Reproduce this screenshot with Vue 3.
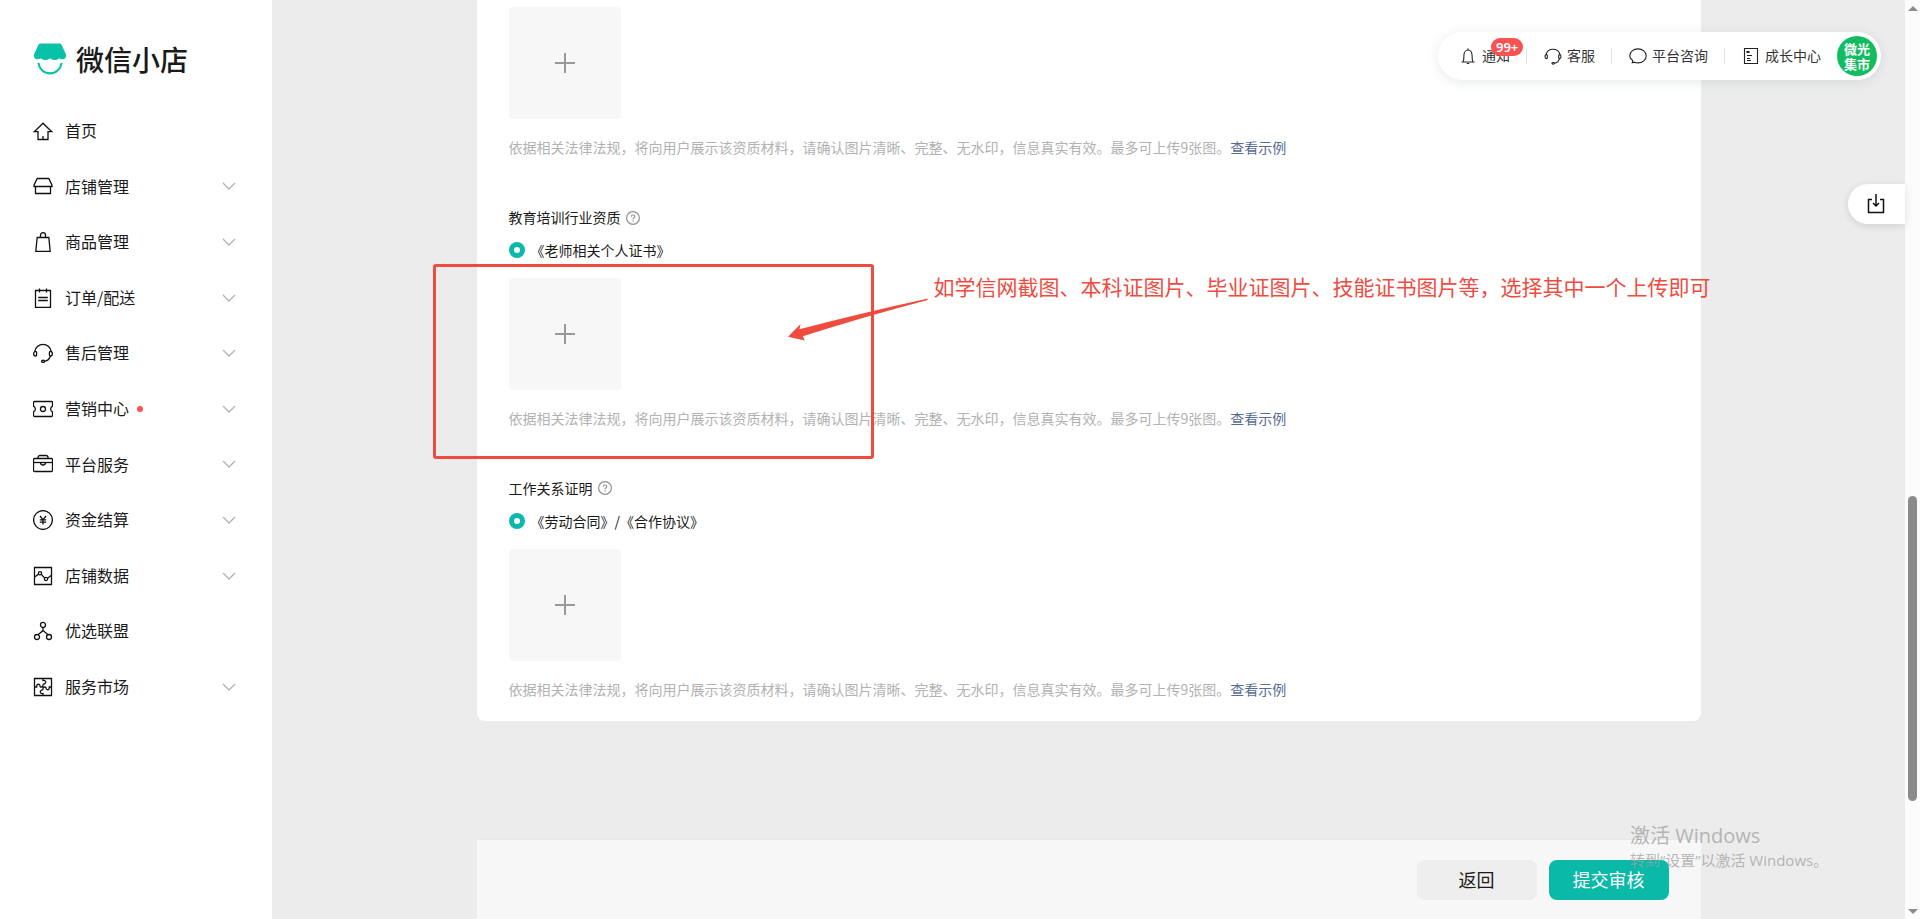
<script setup>
import { ref } from 'vue'

const menu = [
  { label: '首页', icon: ['M10 2.2 1.2 10.7H5v7.8h10v-7.8h3.8z', 'M10 15v3.5'] },
  { label: '店铺管理', more: true, icon: ['M4.2 2.5h11.6L19 9.2v1.3H1V9.2z', 'M2.5 10.5v7h15v-7'] },
  { label: '商品管理', more: true, icon: ['M4.2 5.5h11.6L17.2 19.3H2.8z', 'M7.5 5.5V3.2a2.5 2.5 0 0 1 5 0v2.3'] },
  { label: '订单/配送', more: true, icon: ['M2.5 2.5h15v17h-15z', 'M6.5 0.5v4M13.5 0.5v4M5.2 9.5h9.6M5.2 12.5h9.6'] },
  { label: '售后管理', more: true, icon: ['M1.9 8.2a8.2 8.2 0 0 1 16.2 0', 'M2.6 8.4a1.7 2 0 0 0 0 4.6c.7 0 1-.4 1-1V9.4c0-.6-.3-1-1-1z', 'M17.4 8.4a1.7 2 0 0 1 0 4.6c-.7 0-1-.4-1-1V9.4c0-.6.3-1 1-1z', 'M17.4 13c-.8 3-2.8 4.8-5.8 5.3', 'M8.6 18.3a1.5 1.1 0 1 0 3 0 1.5 1.1 0 1 0-3 0z'] },
  { label: '营销中心', more: true, dot: true, icon: ['M1.5 2.5h17a1 1 0 0 1 1 1v3.6a3.2 3.2 0 0 0 0 5.8v3.6a1 1 0 0 1-1 1h-17a1 1 0 0 1-1-1v-3.6a3.2 3.2 0 0 0 0-5.8V3.5a1 1 0 0 1 1-1z', 'M7.5 10a2.5 2.5 0 1 0 5 0 2.5 2.5 0 1 0-5 0z'] },
  { label: '平台服务', more: true, icon: ['M1.5 4.5h17a1 1 0 0 1 1 1v11a1 1 0 0 1-1 1h-17a1 1 0 0 1-1-1v-11a1 1 0 0 1 1-1z', 'M5 4.5v-1a2 2 0 0 1 2-2h6a2 2 0 0 1 2 2v1', 'M0.5 8.5h19', 'M7.5 8.5a2.5 2.5 0 0 0 5 0'] },
  { label: '资金结算', more: true, icon: ['M0.6 10a9.4 9.4 0 1 0 18.8 0 9.4 9.4 0 1 0-18.8 0z', 'M7 6l3 3.8L13 6M10 9.8v4.6M6.8 9.9h6.4M6.8 12.2h6.4'] },
  { label: '店铺数据', more: true, icon: ['M1.5 1.5h17v17h-17z', 'M1.5 11 5.4 8.4M8.2 8.2l3.4 4M14.5 12.2l4-3', 'M5.4 7.2a1.6 1.6 0 1 0 3.2 0 1.6 1.6 0 1 0-3.2 0z', 'M11.4 13a1.6 1.6 0 1 0 3.2 0 1.6 1.6 0 1 0-3.2 0z'] },
  { label: '优选联盟', icon: ['M7.5 3.9a2.5 2.5 0 1 0 5 0 2.5 2.5 0 1 0-5 0z', 'M1.5 16a2.5 2.5 0 1 0 5 0 2.5 2.5 0 1 0-5 0z', 'M13.5 16a2.5 2.5 0 1 0 5 0 2.5 2.5 0 1 0-5 0z', 'M10 6.4v3.2L5 13.7M10 9.6l5 4.1'] },
  { label: '服务市场', more: true, icon: ['M1.5 1.5h17v17h-17z', 'M1.5 10h2.2c-.4-3.6 3.6-3.6 3.4-.4 1.2.8 2 .4 2.9 0', 'M10 1.5v2c3.4-.6 3.6 3.4.4 3.6-1 1-.4 2-.4 2.9', 'M18.5 10h-2.2c.4 3.6-3.6 3.6-3.4.4-1.2-.8-2-.4-2.9 0', 'M10 18.5v-2c-3.4.6-3.6-3.4-.4-3.6 1-1 .4-2 .4-2.9'] }
]

const tools = [
  { label: '通知', badge: '99+', icon: ['M3.5 16h13M5 16c.8-1.3.9-3 .9-6C5.9 6.500 7.500 4 10 4s4.1 2.5 4.1 6c0 3 .1 4.7.9 6', 'M10 2.5V4M8.8 17.5h2.4'] },
  { label: '客服', icon: ['M3 8.800a7.200 7.200 0 0 1 14 0', 'M3 8.600c-1.400.6-1.400 3.600.5 4 .6 0 .8-.4.800-.8V9.400c0-.5-.5-.8-1.300-.8z', 'M17 8.600c1.400.6 1.400 3.600-.5 4-.6 0-.8-.4-.8-.8V9.400c0-.5.5-.8 1.300-.8z', 'M16.500 12.600c-.8 2.700-2.400 4.300-5 4.700', 'M8.900 17.300a1.300.8 0 1 0 2.600 0 1.300.8 0 1 0-2.600 0z'] },
  { label: '平台咨询', icon: ['M4.3 16.7l.4-2.3C2.8 13.2 1.8 11.7 1.8 9.9c0-3.9 3.6-7 8.2-7s8.200 3.100 8.200 7-3.600 7-8.200 7c-1.300 0-2.500-.2-3.500-.7z'] },
  { label: '成长中心', icon: ['M3.500 2.500h13v15h-13z', 'M6 5.500h2v1H6zM6 9.500h5M6 12.500h3M6 14.500h4'] }
]

const sections = ref([
  { id: 'base' },
  { id: 'teach', title: '教育培训行业资质', option: '《老师相关个人证书》', checked: true },
  { id: 'work', title: '工作关系证明', option: '《劳动合同》/《合作协议》', checked: true }
])
</script>

<template>
  <div class="page">
    <aside class="sidebar">
      <a class="brand" href="#">
        <svg class="brand-mark" viewBox="0 0 34 33" aria-hidden="true">
          <path d="M8 .5h18c1.600 0 2.600.6 3.300 2l4.100 9.200c1.500 3.700-3.600 7-6.900 4-2.600 2.600-6.400 2.400-9.500 0-3.100 2.400-6.900 2.600-9.500 0-3.300 3-8.400-.3-6.900-4L4.700 2.500C5.400 1.100 6.400.5 8 .5z" fill="#07c2a9" />
          <path d="M5 20.500C6 27 11 31.300 17 31.300S28 27 29 20.500" fill="none" stroke="#07c2a9" stroke-width="2.200" />
        </svg>
        <span>微信小店</span>
      </a>
      <nav class="menu">
        <a v-for="item in menu" :key="item.label" class="menu-item" href="#">
          <svg class="menu-icon" viewBox="0 0 20 20" aria-hidden="true">
            <path v-for="d in item.icon" :key="d" :d="d" />
          </svg>
          <span>{{ item.label }}</span>
          <i v-if="item.dot" class="dot"></i>
          <svg v-if="item.more" class="chevron" viewBox="0 0 14 8" aria-hidden="true">
            <path d="M1 1l6 6 6-6" />
          </svg>
        </a>
      </nav>
    </aside>

    <main class="main">
      <form id="qualify" class="card" @submit.prevent>
        <section v-for="s in sections" :key="s.id" class="section">
          <h3 v-if="s.title" class="title">
            {{ s.title }}
            <svg class="help" viewBox="0 0 14 14" aria-hidden="true">
              <circle cx="7" cy="7" r="6.400" />
              <path d="M5.300 5.700c0-2.300 3.500-2.200 3.500-.1 0 1.200-1.700 1.300-1.700 2.600M7.100 9.300v1.100" />
            </svg>
          </h3>
          <label v-if="s.option" class="option">
            <input type="radio" :name="s.id" :checked="s.checked">
            <span>{{ s.option }}</span>
          </label>
          <button class="upload" type="button" aria-label="上传图片">
            <svg viewBox="0 0 20 20" aria-hidden="true"><path d="M10 0v20M0 10h20" /></svg>
          </button>
          <p class="note">依据相关法律法规，将向用户展示该资质材料，请确认图片清晰、完整、无水印，信息真实有效。最多可上传9张图。<a href="#">查看示例</a></p>
        </section>

        <div class="mark-box"></div>
        <svg class="mark-arrow" viewBox="0 0 140 44" aria-hidden="true">
          <path d="M0 38.700 12.600 26 11.400 31.300Q78 14 139 .8q1.500.2 0 1.400Q80 17.500 14.800 38.200l2 4.300z" />
        </svg>
        <p class="mark-text">如学信网截图、本科证图片、毕业证图片、技能证书图片等，选择其中一个上传即可</p>
      </form>

      <footer class="footer">
        <button class="btn" type="button">返回</button>
        <button class="btn primary" type="submit" form="qualify">提交审核</button>
      </footer>

      <header class="toolbar">
        <a v-for="t in tools" :key="t.label" class="tool" href="#">
          <svg class="tool-icon" viewBox="0 0 20 20" aria-hidden="true">
            <path v-for="d in t.icon" :key="d" :d="d" />
          </svg>
          <span class="tool-label">{{ t.label }}</span>
          <b v-if="t.badge" class="badge">{{ t.badge }}</b>
        </a>
        <a class="avatar" href="#">微光<br>集市</a>
      </header>

      <button class="drawer" type="button" aria-label="下载">
        <svg viewBox="0 0 20 20" aria-hidden="true">
          <path d="M6 5.500H2.500v13h15v-13H14M10 0v12M7 9l3 3 3-3" />
        </svg>
      </button>
    </main>

    <div class="scroll" aria-hidden="true">
      <i class="arrow up"></i>
      <i class="thumb"></i>
      <i class="arrow down"></i>
    </div>

    <div class="watermark">
      <p class="wm-title">激活 Windows</p>
      <p class="wm-sub">转到“设置”以激活 Windows。</p>
    </div>
  </div>
</template>

<style>
body {
  margin: 0;
}
</style>

<style scoped>
.page {
  position: relative;
  display: flex;
  min-height: 100vh;
  overflow: hidden;
  background: #ececec;
  color: #1a1a1a;
  font: 14px/1.6 "Noto Sans CJK SC", sans-serif;
}
a {
  color: inherit;
  text-decoration: none;
}
p, h3 {
  margin: 0;
}
button {
  border: 0;
  padding: 0;
  font-family: inherit;
  cursor: pointer;
}
svg {
  display: block;
  flex: none;
}

.sidebar {
  flex: none;
  width: 272px;
  background: #fff;
}
.brand {
  display: flex;
  align-items: center;
  gap: 9px;
  padding: 43px 33px 28px;
  font-size: 28px;
  font-weight: 500;
  line-height: 32px;
}
.brand-mark {
  width: 34px;
  height: 32px;
}
.menu-item {
  display: flex;
  align-items: center;
  padding: 15px 36px 15px 33px;
  font-size: 16px;
}
.menu-icon {
  width: 20px;
  height: 20px;
  margin-right: 12px;
}
.menu-icon path {
  fill: none;
  stroke: #111;
  stroke-width: 1.3;
}
.dot {
  width: 6px;
  height: 6px;
  margin-left: 8px;
  border-radius: 50%;
  background: #fa5151;
}
.chevron {
  width: 14px;
  height: 8px;
  margin-left: auto;
}
.chevron path {
  fill: none;
  stroke: #b2b2b2;
  stroke-width: 1.3;
}

.main {
  position: relative;
  flex: 1;
  display: flex;
  flex-direction: column;
  align-items: center;
}
.card {
  position: relative;
  box-sizing: border-box;
  width: 100%;
  max-width: 1224px;
  padding: 7px 32px 21px;
  border-radius: 0 0 8px 8px;
  background: #fff;
}
.section + .section {
  margin-top: 48px;
}
.title {
  display: flex;
  align-items: center;
  gap: 5px;
  margin-bottom: 10px;
  font-size: 14px;
  font-weight: 400;
}
.help {
  width: 14px;
  height: 14px;
  fill: none;
  stroke: #909090;
  stroke-width: 1.2;
}
.option {
  display: flex;
  align-items: center;
  gap: 6px;
  margin-bottom: 17px;
  line-height: 22px;
}
.option input {
  appearance: none;
  width: 16px;
  height: 16px;
  margin: 0;
  border: 5px solid #0bb9a8;
  border-radius: 50%;
  background: #fff;
}
.upload {
  display: grid;
  place-items: center;
  width: 112px;
  height: 112px;
  border-radius: 4px;
  background: #f7f7f7;
}
.upload svg {
  width: 20px;
  height: 20px;
  stroke: #999;
  stroke-width: 2;
}
.note {
  margin-top: 17px;
  color: #b2b2b2;
}
.note a {
  color: #576b95;
}

.mark-box {
  position: absolute;
  top: 264px;
  left: -44px;
  box-sizing: border-box;
  width: 441px;
  height: 195px;
  border: 3px solid #f04b3f;
  border-radius: 3px;
  pointer-events: none;
}
.mark-arrow {
  position: absolute;
  top: 298px;
  left: 311px;
  width: 140px;
  height: 44px;
  fill: #f04b3f;
}
.mark-text {
  position: absolute;
  top: 270px;
  left: 457px;
  color: #f04b3f;
  font-size: 21px;
  white-space: nowrap;
}

.footer {
  display: flex;
  justify-content: flex-end;
  gap: 12px;
  box-sizing: border-box;
  width: 100%;
  max-width: 1224px;
  margin-top: auto;
  padding: 20px 32px 19px;
  border-top: 1px solid #e8e8e8;
  background: #f7f7f7;
}
.btn {
  height: 40px;
  width: 120px;
  padding-bottom: 2px;
  border-radius: 8px;
  background: #eee;
  color: #1a1a1a;
  font-size: 18px;
}
.btn.primary {
  background: #0bb9a8;
  color: #fff;
}

.toolbar {
  position: absolute;
  top: 32px;
  right: 24px;
  display: flex;
  align-items: center;
  height: 48px;
  padding: 0 4px;
  border-radius: 24px;
  background: #fff;
  box-shadow: 0 2px 12px rgba(20, 50, 60, 0.1);
}
.tool {
  position: relative;
  display: flex;
  align-items: center;
  gap: 4px;
  padding: 0 16px;
  color: #333;
}
.tool + .tool::before {
  content: "";
  position: absolute;
  left: 0;
  width: 1px;
  height: 16px;
  background: #e3e3e3;
}
.tool + .tool {
  padding-left: 17px;
}
.tool-label {
  padding-bottom: 2px;
}
.tool-icon {
  width: 20px;
  height: 20px;
  fill: none;
  stroke: #222;
  stroke-width: 1.1;
}
.badge {
  position: absolute;
  top: -6px;
  left: 49px;
  padding: 0 5px;
  border-radius: 9px;
  background: #fa5151;
  color: #fff;
  font: 600 13px/18px "Noto Sans", sans-serif;
}
.avatar {
  box-sizing: border-box;
  width: 40px;
  height: 40px;
  padding: 5px 0;
  border-radius: 50%;
  background: #12bd62;
  color: #fff;
  font-size: 13px;
  font-weight: 700;
  line-height: 15px;
  text-align: center;
}
.drawer {
  position: absolute;
  top: 184px;
  right: 0;
  display: flex;
  align-items: center;
  width: 57px;
  height: 40px;
  padding-left: 18px;
  border-radius: 20px 0 0 20px;
  background: #fff;
  box-shadow: 0 2px 8px rgba(0, 0, 0, 0.12);
}
.drawer svg {
  width: 20px;
  height: 20px;
  fill: none;
  stroke: #111;
  stroke-width: 1.5;
}

.scroll {
  flex: none;
  display: grid;
  grid-template-rows: 16px 480fr 305fr 102fr 16px;
  justify-items: center;
  align-items: center;
  width: 15px;
  background: #fcfcfc;
}
.thumb {
  grid-row: 3;
  width: 9px;
  height: 100%;
  border-radius: 5px;
  background: #8b8b8b;
}
.arrow {
  border: 5px solid transparent;
}
.arrow.up {
  grid-row: 1;
  border-top: 0;
  border-bottom-color: #8b8b8b;
}
.arrow.down {
  grid-row: 5;
  border-bottom: 0;
  border-top-color: #8b8b8b;
}

.watermark {
  position: absolute;
  right: 96px;
  bottom: 48px;
  width: 194px;
  color: rgba(160, 160, 160, 0.75);
  font-family: "Open Sans", "Noto Sans CJK SC", sans-serif;
  white-space: nowrap;
  pointer-events: none;
}
.wm-title {
  font-size: 20px;
  line-height: 26px;
}
.wm-sub {
  font-size: 15px;
  line-height: 22px;
}
</style>
